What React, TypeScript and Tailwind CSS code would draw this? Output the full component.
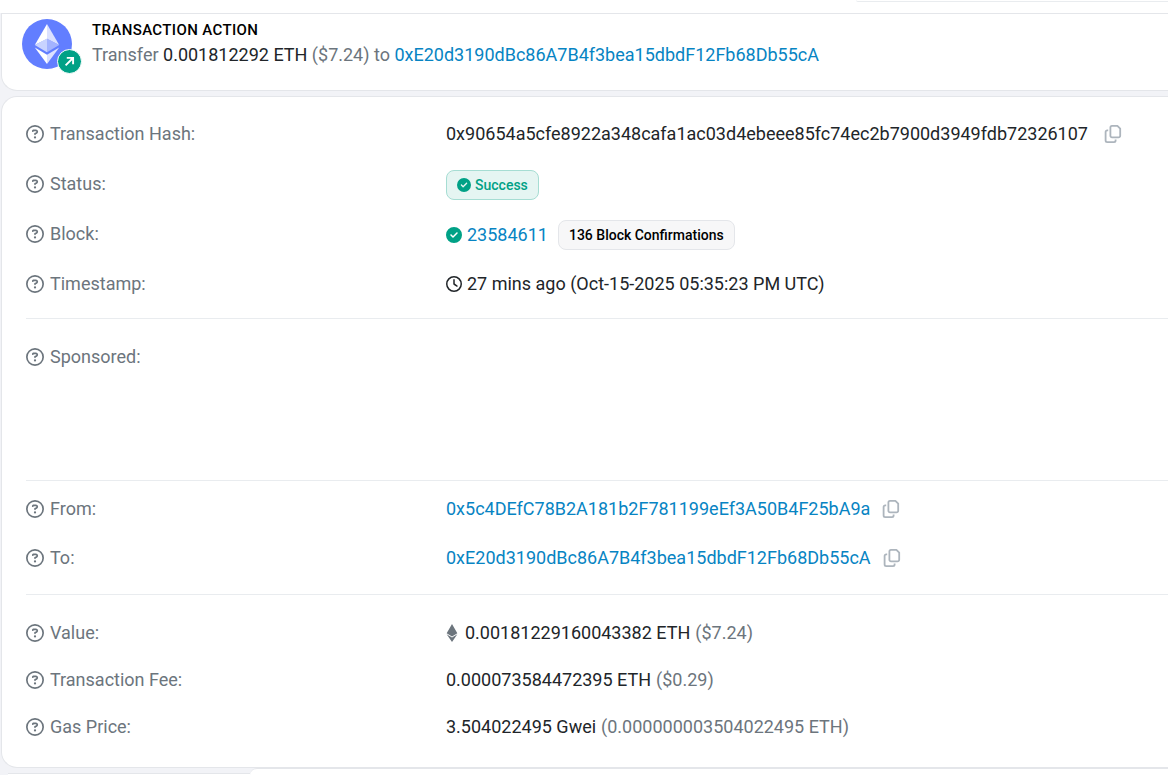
import { FaCircleCheck, FaEthereum, FaRegCircleQuestion, FaRegClock } from "react-icons/fa6";

const addresses = {
  from: "0x5c4DEfC78B2A181b2F781199eEf3A50B4F25bA9a",
  to: "0xE20d3190dBc86A7B4f3bea15dbdF12Fb68Db55cA",
};

function CopyButton({ label }: { label: string }) {
  return (
    <button type="button" aria-label={label} className="ml-3 flex items-center text-[#adb5bd] hover:text-[#6c757d]">
      <svg width="18" height="20" viewBox="0 0 18 20" fill="none" stroke="currentColor" strokeWidth="1.8">
        <path d="M8 1.8h5.4l2.8 2.8v7.2a1.6 1.6 0 0 1-1.6 1.6H8a1.6 1.6 0 0 1-1.6-1.6V3.4A1.6 1.6 0 0 1 8 1.8z" strokeLinejoin="round" />
        <path d="M4.2 6.4H3.2a1.6 1.6 0 0 0-1.6 1.6v8.6a1.6 1.6 0 0 0 1.6 1.6h6.8a1.6 1.6 0 0 0 1.6-1.6v-1" />
      </svg>
    </button>
  );
}

function Row({ label, children }: { label: string; children?: React.ReactNode }) {
  return (
    <div className="flex h-[30px] items-start">
      <dt className="flex w-[420px] shrink-0 items-center gap-[6px] leading-7 text-[#6c757d]">
        <FaRegCircleQuestion size={18} />
        {label}:
      </dt>
      <dd className="flex min-w-0 items-center whitespace-nowrap leading-7">{children}</dd>
    </div>
  );
}

function EthLogo() {
  return (
    <div className="relative mr-5 size-[50px] shrink-0">
      <svg width="50" height="50" viewBox="0 0 50 50">
        <circle cx="25" cy="25" r="25" fill="#627eff" />
        <path d="M25 5v15L12.8 26z" fill="#fff" />
        <path d="M25 5v15l12.2 6z" fill="#dbe1ff" />
        <path d="M25 19.5v13.7L12.8 26z" fill="#c9d3ff" />
        <path d="M25 19.5v13.7L37.2 26z" fill="#a3b3ff" />
        <path d="M12.8 28.5L25 35.7V45z" fill="#fff" />
        <path d="M37.2 28.5L25 35.7V45z" fill="#dbe1ff" />
      </svg>
      <span className="absolute -right-[10px] -bottom-[5px] flex size-[25px] items-center justify-center rounded-full border border-white bg-[#00a186]">
        <svg width="11" height="11" viewBox="0 0 11 11" fill="none" stroke="#fff" strokeWidth="1.9">
          <path d="M1.6 9.4L9 2M2.8 1.9h6.3v6.3" />
        </svg>
      </span>
    </div>
  );
}

export default function App() {
  return (
    <div className="min-h-screen overflow-hidden bg-[#f2f3f7] text-[18px] text-[#212529] [font-family:Roboto,sans-serif]">
      {/* Tail of the page header */}
      <div className="flex h-[13px] justify-end bg-white">
        <div className="h-[2px] w-[312px] rounded-bl-lg border-b border-[#e9ecef]" />
      </div>

      <section className="ml-px flex h-[78px] items-start rounded-bl-2xl border border-r-0 border-[#e4e6ea] bg-white pt-[5px] pl-5">
        <EthLogo />
        <div>
          <h2 className="text-[15px] leading-[22px] font-medium tracking-wide text-black">TRANSACTION ACTION</h2>
          <p className="leading-7 whitespace-nowrap text-[#6c757d]">
            Transfer <span className="text-[#212529]">0.001812292 ETH</span> ($7.24) to{" "}
            <a href="#to" className="text-[#0784c3]">{addresses.to}</a>
          </p>
        </div>
      </section>

      <main className="mt-[5px] ml-px rounded-l-2xl border border-r-0 border-[#e4e6ea] bg-white pl-6">
        <dl className="flex flex-col gap-5 border-b border-[#e9ecef] pt-[23px] pb-[18px]">
          <Row label="Transaction Hash">
            0x90654a5cfe8922a348cafa1ac03d4ebeee85fc74ec2b7900d3949fdb72326107
            <span className="ml-1">
              <CopyButton label="Copy transaction hash" />
            </span>
          </Row>
          <Row label="Status">
            <span className="flex h-[30px] items-center gap-1 rounded-lg border border-[#a6ddd3] bg-[#e5f5f2] px-[10px] text-sm font-medium text-[#00a186]">
              <FaCircleCheck size={14} />
              Success
            </span>
          </Row>
          <Row label="Block">
            <FaCircleCheck size={16} className="mr-[5px] text-[#00a186]" />
            <a href="#block" className="text-[#0784c3]">23584611</a>
            <span className="ml-[10px] flex h-[30px] items-center rounded-lg border border-[#e4e6ea] bg-[#f7f7f8] px-[10px] text-sm font-medium text-black">
              136 Block Confirmations
            </span>
          </Row>
          <Row label="Timestamp">
            <FaRegClock size={16} className="mr-[5px]" />
            27 mins ago (Oct-15-2025 05:35:23 PM UTC)
          </Row>
        </dl>

        <dl className="h-[162px] border-b border-[#e9ecef] pt-6">
          <Row label="Sponsored" />
        </dl>

        <dl className="flex flex-col gap-[19px] border-b border-[#e9ecef] pt-[14px] pb-5">
          <Row label="From">
            <a href="#from" className="text-[#0784c3]">{addresses.from}</a>
            <CopyButton label="Copy sender address" />
          </Row>
          <Row label="To">
            <a href="#to" className="text-[#0784c3]">{addresses.to}</a>
            <CopyButton label="Copy recipient address" />
          </Row>
        </dl>

        <dl className="flex flex-col gap-[17px] py-6">
          <Row label="Value">
            <FaEthereum size={18} className="-ml-[3px] mr-1 text-[#6c757d]" />
            0.00181229160043382 ETH <span className="ml-[5px] text-[#6c757d]">($7.24)</span>
          </Row>
          <Row label="Transaction Fee">
            0.000073584472395 ETH <span className="ml-[5px] text-[#6c757d]">($0.29)</span>
          </Row>
          <Row label="Gas Price">
            3.504022495 Gwei <span className="ml-[5px] text-[#6c757d]">(0.000000003504022495 ETH)</span>
          </Row>
        </dl>
      </main>

      {/* Next card, just coming into view */}
      <div className="flex h-[7px] items-end pl-2">
        <div className="h-[2px] w-[242px] border-t border-[#e4e6ea] bg-white" />
        <div className="h-[7px] flex-1 rounded-tl-lg border-t border-[#e4e6ea] bg-white" />
      </div>
    </div>
  );
}
